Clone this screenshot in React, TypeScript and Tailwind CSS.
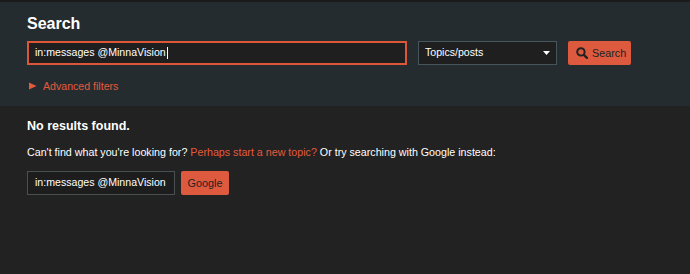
import React from "react";

export default function App() {
  const font = { fontFamily: '"Liberation Sans", Arial, sans-serif' };
  return (
    <div className="w-[690px] h-[274px] bg-[#222222] overflow-hidden" style={font}>
      <div className="h-[2px] bg-[#1b1b1b]" />
      <div className="bg-[#252c2f] pl-[27px] pt-[12px] pb-[13px]">
        <h1 className="text-[16px] leading-[20px] font-bold text-white">Search</h1>
        <div className="flex items-center mt-[7px] h-[24px]">
          <div className="w-[380px] h-[24px] border-2 border-[#dc5638] bg-[#1f1f1f] flex items-center pl-[6px] text-[10.6px] text-white">
            <span>in:messages @MinnaVision</span>
            <span className="w-[1px] h-[12px] bg-white ml-[1px]" />
          </div>
          <div className="ml-[11px] w-[139px] h-[24px] border border-[#45555c] bg-[#1f1f1f] flex items-center justify-between pl-[6px] pr-[6px] text-[10.6px] text-white">
            <span>Topics/posts</span>
            <svg width="7" height="4" viewBox="0 0 7 4">
              <path d="M0 0 L7 0 L3.5 4 Z" fill="#ffffff" />
            </svg>
          </div>
          <div className="ml-[11px] w-[63px] h-[24px] rounded-[2px] bg-[#dd5a3f] flex items-center pl-[8px] text-[10.8px] text-[#222222]">
            <svg width="12" height="12" viewBox="0 0 11 11">
              <circle cx="4.5" cy="4.5" r="3.4" fill="none" stroke="#222222" strokeWidth="1.8" />
              <path d="M7.2 7.2 L10 10" stroke="#222222" strokeWidth="2.1" strokeLinecap="round" />
            </svg>
            <span className="ml-[4px]">Search</span>
          </div>
        </div>
        <div className="mt-[14px] flex items-center h-[14px] text-[10.6px] leading-[14px] text-[#e45a3d]">
          <svg width="8" height="8" viewBox="0 0 8 8" className="ml-[2px]">
            <path d="M0 0.5 L7.5 4 L0 7.5 Z" fill="#e45a3d" />
          </svg>
          <span className="ml-[6px]">Advanced filters</span>
        </div>
      </div>
      <div className="pl-[27px]">
        <div className="mt-[12px] text-[12.5px] leading-[16px] font-bold text-white">No results found.</div>
        <div className="mt-[11px] text-[10.7px] leading-[14px] text-white">
          Can't find what you're looking for? <span className="text-[#e45a3d]">Perhaps start a new topic?</span> Or try searching with Google instead:
        </div>
        <div className="mt-[12px] flex items-center">
          <div className="w-[148px] h-[24px] border border-[#4a5052] bg-[#1d1d1d] flex items-center pl-[7px] text-[10.6px] text-white">
            in:messages @MinnaVision
          </div>
          <div className="ml-[6px] w-[48px] h-[24px] rounded-[2px] bg-[#dd5a3f] flex items-center justify-center text-[10.8px] text-[#222222]">
            Google
          </div>
        </div>
      </div>
    </div>
  );
}
